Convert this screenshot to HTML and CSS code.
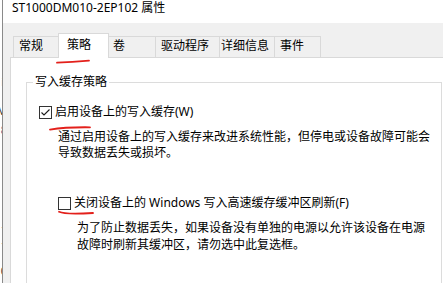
FILE: index.html
```html
<!DOCTYPE html>
<html lang="zh-CN">
<head>
<meta charset="utf-8">
<link rel="stylesheet" href="styles.css">
</head>
<body>
<div class="bgwin">
  <span class="frag f1">ij</span>
  <span class="frag f2">M</span>
  <span class="frag f3">8</span>
  <span class="frag f4">1</span>
  <span class="frag f5">1</span>
  <span class="frag f6">0</span>
</div>
<div class="window">
  <div class="titlebar">ST1000DM010-2EP102 属性</div>
  <div class="body">
    <div class="tabs">
      <div class="tab w47">常规</div>
      <div class="tab selected">策略</div>
      <div class="tab w48">卷</div>
      <div class="tab w64">驱动程序</div>
      <div class="tab w55 tight">详细信息</div>
      <div class="tab w46 last">事件</div>
    </div>
    <div class="panel">
      <fieldset class="group">
        <legend>写入缓存策略</legend>
        <div class="group-body">
          <div class="row">
            <span class="check on"><svg width="11" height="11" viewBox="0 0 11 11"><polyline points="1.5,5.5 4,8 9.5,2.5" fill="none" stroke="#1a1a1a" stroke-width="1.1"/></svg></span>
            <span class="label">启用设备上的写入缓存(W)</span>
          </div>
          <div class="desc d1">通过启用设备上的写入缓存来改进系统性能，但停电或设备故障可能会<br>导致数据丢失或损坏。</div>
          <div class="row r2">
            <span class="check"></span>
            <span class="label">关闭设备上的 Windows 写入高速缓存缓冲区刷新(F)</span>
          </div>
          <div class="desc d2">为了防止数据丢失，如果设备没有单独的电源以允许该设备在电源<br>故障时刷新其缓冲区，请勿选中此复选框。</div>
        </div>
      </fieldset>
    </div>
  </div>
</div>
<svg class="marks" width="443" height="283" viewBox="0 0 443 283">
  <path d="M57,62.6 Q72,62 89,60.6" />
  <path d="M50,129.6 Q66,127 90,127.3" />
  <path d="M59,211.8 C64,214.2 72,214.4 93,213" />
</svg>
</body>
</html>
```

FILE: styles.css
```css
* { box-sizing: border-box; }
html, body {
  margin: 0;
  padding: 0;
}
body {
  width: 443px;
  height: 283px;
  overflow: hidden;
  display: flex;
  position: relative;
  background: #fff;
  font-family: "Noto Sans", "Noto Sans CJK SC", sans-serif;
  font-size: 12px;
  color: #000;
}
.bgwin {
  width: 3px;
  flex: none;
  background: #fff;
  border-right: 1px solid #8a8a8a;
  position: relative;
  overflow: hidden;
}
.frag {
  position: absolute;
  right: -5px;
  font-size: 11px;
  line-height: 11px;
  color: #333;
}
.f1 { top: 76px; color: #3a6fb0; }
.f2 { top: 105px; }
.f3 { top: 124px; color: #4a4a8a; }
.f4 { top: 224px; }
.f5 { top: 240px; }
.f6 { top: 265px; }
.window {
  flex: 1;
  display: flex;
  flex-direction: column;
  overflow: hidden;
  min-width: 0;
}
.titlebar {
  height: 23px;
  flex: none;
  background: #fff;
  padding-left: 9px;
  line-height: 16px;
  white-space: nowrap;
}
.body {
  flex: 1;
  background: #f0f0f0;
  padding: 10px 0 0 7px;
  display: flex;
  flex-direction: column;
}
.tabs {
  display: flex;
  align-items: flex-end;
  padding-left: 3px;
  position: relative;
  z-index: 1;
  flex: none;
}
.tab {
  height: 21px;
  border-top: 1px solid #d9d9d9;
  border-left: 1px solid #d9d9d9;
  background: #f0f0f0;
  padding-left: 5px;
  line-height: 18px;
  white-space: nowrap;
}
.tab.last { border-right: 1px solid #d9d9d9; }
.tab.tight { padding-left: 1px; }
.w47 { width: 47px; }
.w48 { width: 48px; }
.w64 { width: 64px; }
.w55 { width: 55px; }
.w46 { width: 47px; }
.tab.selected {
  width: 51px;
  height: 25px;
  margin: 0 -2px -1px;
  background: #fff;
  border-right: 1px solid #d9d9d9;
  padding-left: 8px;
  line-height: 22px;
  position: relative;
  z-index: 2;
}
.tab.selected + .tab { border-left-color: transparent; }
.panel {
  flex: 1;
  background: #fff;
  border: 1px solid #d9d9d9;
  margin-right: -20px;
  margin-bottom: -20px;
  padding-top: 17px;
}
.group {
  margin: 0 20px 0 15px;
  padding: 0;
  border: 1px solid #dcdcdc;
  height: 240px;
  min-width: 0;
}
.group legend {
  margin-left: 6px;
  padding: 0 2px;
  line-height: 14px;
}
.group-body {
  padding: 15px 0 0 12px;
}
.row {
  display: flex;
  align-items: center;
  height: 16px;
  line-height: 16px;
  white-space: nowrap;
}
.row.r2 {
  margin-top: 34px;
  padding-left: 19px;
}
.check {
  width: 13px;
  height: 13px;
  border: 1px solid #333;
  background: #fff;
  flex: none;
  display: flex;
  align-items: center;
  justify-content: center;
}
.label {
  margin-left: 3px;
}
.desc {
  white-space: nowrap;
}
.desc.d1 {
  margin-top: 9px;
  padding-left: 19px;
  line-height: 16px;
}
.desc.d2 {
  margin-top: 8px;
  padding-left: 38px;
  line-height: 17px;
}
.marks {
  position: absolute;
  left: 0;
  top: 0;
  pointer-events: none;
}
.marks path {
  fill: none;
  stroke: #e3201b;
  stroke-width: 1.8;
  stroke-linecap: round;
}
```
